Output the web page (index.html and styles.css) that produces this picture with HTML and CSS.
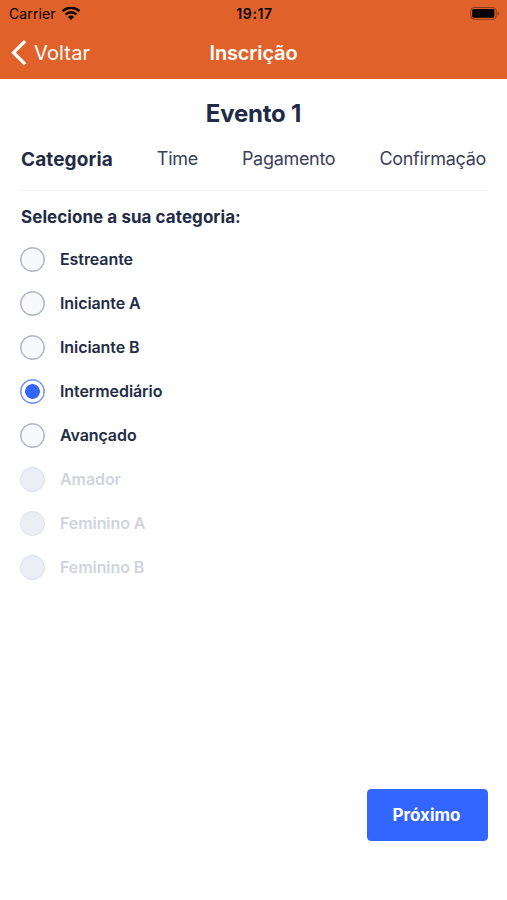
FILE: index.html
```html
<!DOCTYPE html>
<html lang="pt-BR">
<head>
<meta charset="utf-8">
<title>Inscrição</title>
<link rel="stylesheet" href="styles.css">
</head>
<body>
<header class="top">
  <div class="status">
    <div class="carrier"><span>Carrier</span>
      <svg width="20" height="14" viewBox="0 0 20 14" fill="none" stroke="#000" stroke-width="2.4"><path d="M1.6 4.2a12 12 0 0 1 16.8 0M4.6 7.5a7.6 7.6 0 0 1 10.8 0"/><path d="M10 13 6.9 9.9a4.4 4.4 0 0 1 6.2 0Z" fill="#000" stroke="none"/></svg>
    </div>
    <span class="clock">19:17</span>
    <svg class="battery" width="30" height="14" viewBox="0 0 30 14"><rect x=".8" y=".5" width="25.4" height="11.8" rx="3.4" fill="none" stroke="#000" stroke-opacity=".4"/><rect x="2.2" y="2" width="22.2" height="8.8" rx="1.6"/><path d="M27.5 4.2a2.4 2.4 0 0 1 0 4.4Z" opacity=".4"/></svg>
  </div>
  <nav class="bar">
    <a class="back"><svg width="16" height="26" viewBox="0 0 16 26" fill="none" stroke="#fff" stroke-width="3.3"><path d="M14.1 1.2 2.5 12.7l11.6 11.5"/></svg><span>Voltar</span></a>
    <h1 class="title">Inscrição</h1>
    <span></span>
  </nav>
</header>
<main class="content">
  <h2 class="event">Evento 1</h2>
  <div class="steps">
    <span class="step current">Categoria</span>
    <span class="step">Time</span>
    <span class="step">Pagamento</span>
    <span class="step">Confirmação</span>
  </div>
  <p class="prompt">Selecione a sua categoria:</p>
  <div class="options">
    <label class="option"><i class="radio"></i><span>Estreante</span></label>
    <label class="option"><i class="radio"></i><span>Iniciante A</span></label>
    <label class="option"><i class="radio"></i><span>Iniciante B</span></label>
    <label class="option selected"><i class="radio"></i><span>Intermediário</span></label>
    <label class="option"><i class="radio"></i><span>Avançado</span></label>
    <label class="option disabled"><i class="radio"></i><span>Amador</span></label>
    <label class="option disabled"><i class="radio"></i><span>Feminino A</span></label>
    <label class="option disabled"><i class="radio"></i><span>Feminino B</span></label>
  </div>
  <button class="next">Próximo</button>
</main>
</body>
</html>
```
FILE: styles.css
```css
* { box-sizing: border-box; }
body {
  margin: 0;
  height: 900px;
  display: flex;
  flex-direction: column;
  background: #fff;
  color: #222b45;
  font-family: Inter, "Liberation Sans", sans-serif;
}
h1, h2, p { margin: 0; }
svg { display: block; flex: none; }
.top { height: 79px; background: #e0622a; }
.status {
  height: 27px;
  padding: 0 7px 0 9px;
  display: grid;
  grid-template-columns: 1fr auto 1fr;
  align-items: center;
  color: #000;
  font-size: 14px;
}
.carrier { display: flex; align-items: center; gap: 5px; letter-spacing: .1px; }
.clock { font-weight: 600; font-size: 14px; letter-spacing: .6px; }
.battery { justify-self: end; }
.bar {
  height: 52px;
  padding: 0 11px;
  display: grid;
  grid-template-columns: 1fr auto 1fr;
  align-items: center;
  color: #fff;
}
.back { display: flex; align-items: center; gap: 7px; font-size: 20px; letter-spacing: .15px; }
.title { font-size: 20px; font-weight: 600; letter-spacing: -.15px; }
.content {
  flex: 1;
  padding: 20px 19px 59px 20px;
  display: flex;
  flex-direction: column;
}
.event { padding-right: 1px; font-size: 24px; line-height: 30px; font-weight: 700; text-align: center; letter-spacing: -.2px; }
.steps {
  height: 62px;
  padding: 0 2px 2px 1px;
  display: flex;
  justify-content: space-between;
  align-items: center;
  border-bottom: 1px solid #f0f2f6;
  font-size: 18px;
  letter-spacing: -.3px;
}
.step { color: #3a405a; }
.step.current { padding-top: 2px; color: #222b45; font-size: 19px; font-weight: 700; letter-spacing: .1px; }
.prompt { margin: 14px 0 0 1px; font-size: 17px; line-height: 24px; font-weight: 700; letter-spacing: .06px; }
.options { margin-top: 8px; }
.option { height: 44px; display: flex; align-items: center; gap: 15px; font-size: 16px; font-weight: 600; letter-spacing: -.08px; }
.radio {
  width: 25px;
  height: 25px;
  flex: none;
  border: 1.5px solid #a4abb9;
  border-radius: 50%;
  background: #f7f9fc;
  box-shadow: inset 0 0 0 .5px #a4abb9;
}
.selected .radio {
  border-color: #5b80ff;
  background: radial-gradient(circle, #3366ff 7px, #fff 7.7px);
  box-shadow: inset 0 0 0 .5px #5b80ff;
}
.disabled { color: #d0d4db; }
.disabled .radio { border-color: #dce0e6; background: #ebeef2; box-shadow: none; }
.next {
  margin-top: auto;
  align-self: flex-end;
  width: 121px;
  height: 52px;
  padding: 0 2px 0 0;
  border: 1px solid #3366ff;
  border-radius: 4px;
  background: #3366ff;
  color: #fff;
  font: 700 17px Inter, sans-serif;
}
```
